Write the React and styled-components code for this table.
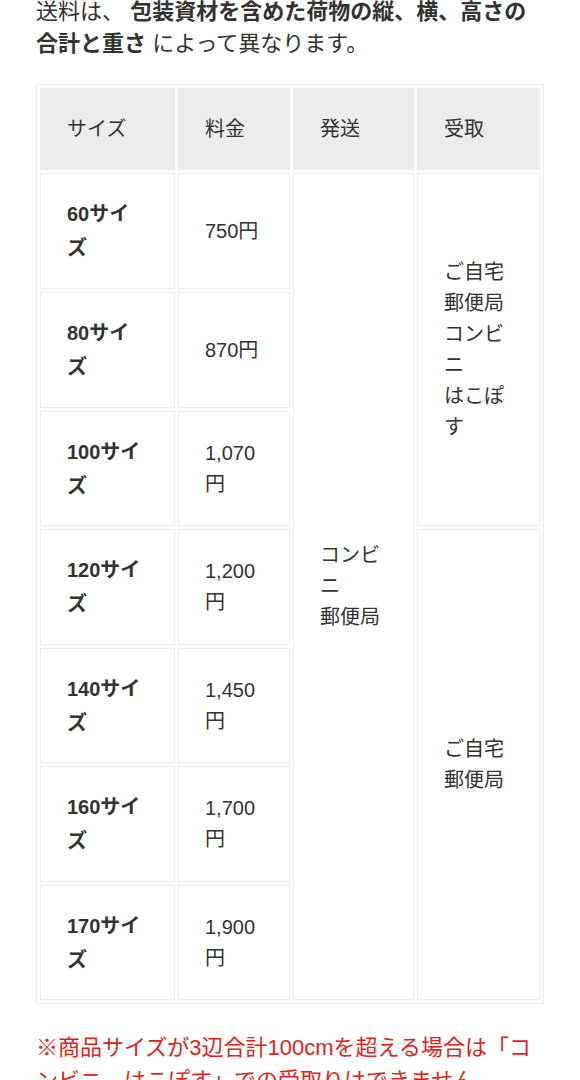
import React from "react";
import styled, { createGlobalStyle } from "styled-components";

const GlobalStyle = createGlobalStyle`
  html, body { margin: 0; padding: 0; background: #fff; }
  body {
    font-family: "Liberation Sans", "Noto Sans CJK JP", sans-serif;
    color: #333;
    overflow: hidden;
  }
`;

const Page = styled.div`
  width: 580px;
  padding: 0 36px;
  box-sizing: border-box;
`;

const Lead = styled.p`
  margin: -4px 0 24px;
  font-size: 22px;
  line-height: 32px;
  color: #333;
  strong { font-weight: 700; color: #333; }
`;

const Table = styled.table`
  width: 100%;
  table-layout: fixed;
  border-collapse: separate;
  border-spacing: 3px;
  border: 1px solid #ececec;
  font-size: 20px;
  line-height: 31px;
  color: #333;
`;

const HeadCell = styled.th`
  box-sizing: border-box;
  width: ${(p) => p.$w}px;
  height: 82px;
  background: #ececec;
  border: 1px solid #ececec;
  padding: 0 26px;
  text-align: left;
  font-weight: 400;
  vertical-align: middle;
`;

const Cell = styled.td`
  box-sizing: border-box;
  height: ${(p) => p.$h || 116}px;
  border: 1px solid #ececec;
  padding: 0 ${(p) => (p.$wide ? 30 : 26)}px 0 26px;
  text-align: left;
  vertical-align: middle;
  font-weight: ${(p) => (p.$bold ? 700 : 400)};
  line-height: ${(p) => (p.$bold ? 34 : 31)}px;
`;

const Note = styled.p`
  margin: 27px 0 0;
  font-size: 22px;
  line-height: 33px;
  color: #e2231a;
`;

const rows = [
  { size: "60サイズ", price: "750円", h: 116 },
  { size: "80サイズ", price: "870円", h: 116 },
  { size: "100サイズ", price: "1,070円", h: 115 },
  { size: "120サイズ", price: "1,200円", h: 116 },
  { size: "140サイズ", price: "1,450円", h: 115 },
  { size: "160サイズ", price: "1,700円", h: 116 },
  { size: "170サイズ", price: "1,900円", h: 115 },
];

const Lines = ({ items }) =>
  items.map((t, i) => (
    <React.Fragment key={i}>
      {i > 0 && <br />}
      {t}
    </React.Fragment>
  ));

export default function App() {
  return (
    <Page>
      <GlobalStyle />
      <Lead>
        送料は、 <strong>包装資材を含めた荷物の縦、横、高さの合計と重さ</strong> によって異なります。
      </Lead>
      <Table>
        <thead>
          <tr>
            <HeadCell $w={135}>サイズ</HeadCell>
            <HeadCell $w={112}>料金</HeadCell>
            <HeadCell $w={121}>発送</HeadCell>
            <HeadCell $w={123}>受取</HeadCell>
          </tr>
        </thead>
        <tbody>
          {rows.map((r, i) => (
            <tr key={r.size}>
              <Cell $bold $wide $h={r.h}>{r.size}</Cell>
              <Cell $h={r.h}>{r.price}</Cell>
              {i === 0 && (
                <Cell rowSpan={7}>コンビニ<br />郵便局</Cell>
              )}
              {i === 0 && (
                <Cell rowSpan={3}>
                  <Lines items={["ご自宅", "郵便局", "コンビニ", "はこぽす"]} />
                </Cell>
              )}
              {i === 3 && (
                <Cell rowSpan={4}>
                  <Lines items={["ご自宅", "郵便局"]} />
                </Cell>
              )}
            </tr>
          ))}
        </tbody>
      </Table>
      <Note>
        ※商品サイズが3辺合計100cmを超える場合は「コンビニ、はこぽす」での受取りはできません。
      </Note>
    </Page>
  );
}
